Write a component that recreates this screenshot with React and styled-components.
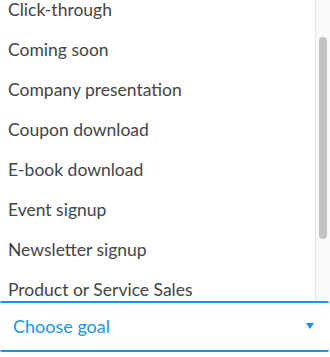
import React, { useEffect, useRef } from "react";
import styled, { createGlobalStyle } from "styled-components";

const goals = [
  "App download",
  "Click-through",
  "Coming soon",
  "Company presentation",
  "Coupon download",
  "E-book download",
  "Event signup",
  "Newsletter signup",
  "Product or Service Sales",
  "Webinar registration",
  "Other",
];

const LIST_HEIGHT = 301;
const SCROLL_TOP = 56;

export default function App() {
  const listRef = useRef();
  const contentHeight = 10 + goals.length * 40;
  const thumbHeight = (LIST_HEIGHT * LIST_HEIGHT) / contentHeight;
  const thumbTop =
    (SCROLL_TOP / (contentHeight - LIST_HEIGHT)) * (LIST_HEIGHT - thumbHeight);

  useEffect(() => {
    if (listRef.current) listRef.current.scrollTop = SCROLL_TOP;
  }, []);

  return (
    <>
      <GlobalStyle />
      <Dropdown>
        <ListRow>
          <OptionList ref={listRef}>
            {goals.map((goal) => (
              <Option key={goal}>{goal}</Option>
            ))}
          </OptionList>
          <ScrollTrack>
            <ScrollThumb style={{ marginTop: thumbTop, height: thumbHeight }} />
          </ScrollTrack>
        </ListRow>
        <SelectField>
          <Placeholder>Choose goal</Placeholder>
          <Caret viewBox="0 0 8 6" aria-hidden="true">
            <path d="M0 0h8L4 6z" fill="#1b8ee0" />
          </Caret>
        </SelectField>
      </Dropdown>
    </>
  );
}

const GlobalStyle = createGlobalStyle`
  html, body {
    margin: 0;
    padding: 0;
    background: #fff;
  }
  body {
    font-family: Lato, "Open Sans", Arial, sans-serif;
  }
`;

const Dropdown = styled.div`
  width: 330px;
  display: flex;
  flex-direction: column;
`;

const ListRow = styled.div`
  display: flex;
  height: ${LIST_HEIGHT}px;
`;

const OptionList = styled.ul`
  flex: 1;
  list-style: none;
  margin: 0;
  padding: 5px 0;
  overflow: hidden;
`;

const ScrollTrack = styled.div`
  width: 14px;
  flex-shrink: 0;
  background: #f8f8f8;
  border-left: 1px solid #e6e6e6;
  display: flex;
  flex-direction: column;
  align-items: center;
`;

const ScrollThumb = styled.div`
  width: 8px;
  border-radius: 4px;
  background: #c2c2c2;
`;

const Option = styled.li`
  height: 40px;
  display: flex;
  align-items: center;
  padding-left: 8px;
  font-size: 17.5px;
  color: #444;
`;

const SelectField = styled.div`
  height: 51px;
  box-sizing: border-box;
  width: 329px;
  border-top: 2px solid #1b95e0;
  border-bottom: 2px solid #1b95e0;
  border-radius: 2px;
  display: flex;
  align-items: center;
  justify-content: space-between;
  padding: 0 15px 2px 13px;
`;

const Placeholder = styled.span`
  font-size: 18px;
  color: #1b95e0;
`;

const Caret = styled.svg`
  width: 8px;
  height: 6px;
`;
